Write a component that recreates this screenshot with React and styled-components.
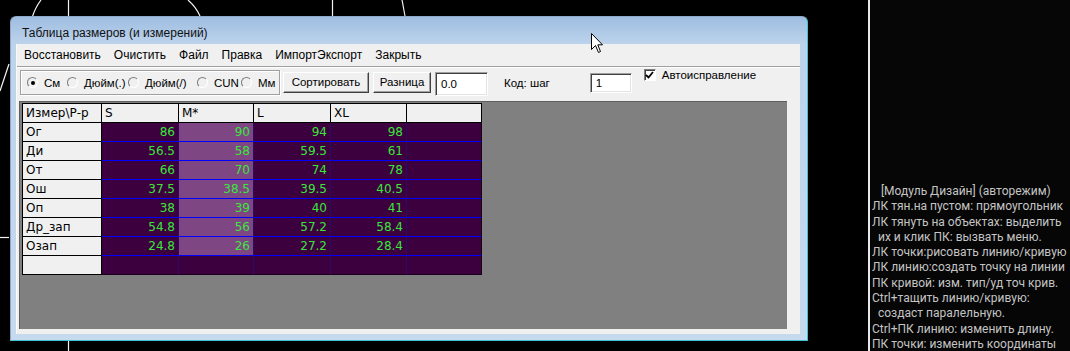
import React from "react";
import styled, { createGlobalStyle } from "styled-components";

const Global = createGlobalStyle`
  html, body { margin: 0; padding: 0; background: #000; }
  body { font-family: "Liberation Sans", Arial, sans-serif; }
`;

const Screen = styled.div`
  display: flex;
  width: 1070px;
  height: 351px;
  overflow: hidden;
  background: #000;
`;

const Canvas = styled.div`
  position: relative;
  width: 868px;
  height: 351px;
  flex: none;
`;

const Lines = styled.svg`
  position: absolute;
  left: 0;
  top: 0;
`;

const Divider = styled.div`
  width: 2px;
  flex: none;
  background: #e8e8e8;
`;

const Side = styled.div`
  flex: 1;
  background: #060606;
  padding: 184px 0 0 2px;
  font-family: Roboto, "Liberation Sans", sans-serif;
  font-size: 12px;
  line-height: 15.3px;
  color: #c4c4c4;
  white-space: pre;
`;

const Win = styled.div`
  position: absolute;
  left: 10px;
  top: 16px;
  width: 798px;
  height: 325px;
  box-sizing: border-box;
  border: 1px solid #8ea9c8;
  border-right-color: #3fc4d6;
  border-bottom-color: #3fc4d6;
  border-radius: 6px 6px 0 0;
  background: linear-gradient(#9fbde0 0px, #bcd3ec 27px, #c6daee 100%);
  display: flex;
  flex-direction: column;
`;

const TitleBar = styled.div`
  height: 27px;
  flex: none;
  display: flex;
  align-items: center;
  padding: 4px 0 0 11px;
  box-sizing: border-box;
  font-size: 12px;
  color: #111;
`;

const Client = styled.div`
  flex: 1;
  margin: 0 7px 6px 6px;
  background: #f0f0f0;
  display: flex;
  flex-direction: column;
  box-shadow: -1px 0 0 #fafafa;
`;

const MenuBar = styled.div`
  height: 22px;
  flex: none;
  display: flex;
  align-items: center;
  font-size: 12px;
  color: #000;
  background: #f0f0f0;
  padding-left: 0.5px;
`;

const MenuItem = styled.span`
  padding: 0 6.5px;
`;

const Sep = styled.div`
  height: 1px;
  flex: none;
  background: #a0a0a0;
  border-bottom: 1px solid #fff;
`;

const Toolbar = styled.div`
  height: 33px;
  flex: none;
  display: flex;
  align-items: flex-start;
  font-size: 11px;
  color: #000;
`;

const GroupBox = styled.div`
  margin: 2px 0 0 3px;
  width: 260px;
  height: 25px;
  box-sizing: border-box;
  border: 1px solid #a0a0a0;
  box-shadow: inset 1px 1px 0 #fff, 1px 1px 0 #fff;
  display: flex;
  align-items: center;
  padding-left: 6px;
`;

const RadioItem = styled.label`
  width: ${p => p.$w}px;
  flex: none;
  display: flex;
  align-items: center;
  gap: 6px;
  font-size: 11.5px;
  white-space: nowrap;
`;

const RadioDot = styled.span`
  width: 11px;
  height: 11px;
  box-sizing: border-box;
  border-radius: 50%;
  border: 1.5px solid;
  border-color: #7a7a7a #fff #fff #7a7a7a;
  background: #f0f0f0;
  display: flex;
  align-items: center;
  justify-content: center;
  flex: none;
  &::after {
    content: "";
    width: 4px;
    height: 4px;
    border-radius: 50%;
    background: ${p => (p.$on ? "#000" : "transparent")};
  }
`;

const Button = styled.div`
  margin: 4px 0 0 ${p => p.$ml}px;
  width: ${p => p.$w}px;
  height: 21px;
  box-sizing: border-box;
  border: 1px solid;
  border-color: #fff #404040 #404040 #fff;
  box-shadow: inset -1px -1px 0 #a0a0a0;
  background: #f0f0f0;
  display: flex;
  align-items: center;
  justify-content: center;
  font-size: 11.5px;
  padding-bottom: 2px;
`;

const Input = styled.div`
  margin: ${p => p.$top}px 0 0 ${p => p.$ml}px;
  width: ${p => p.$w}px;
  height: ${p => p.$h}px;
  box-sizing: border-box;
  border: 1px solid;
  border-color: #a0a0a0 #fff #fff #a0a0a0;
  box-shadow: inset 1px 1px 0 #404040, inset -1px -1px 0 #e3e3e3;
  background: #fff;
  display: flex;
  align-items: center;
  padding-left: 5px;
  font-size: 11.5px;
`;

const Label = styled.span`
  margin: ${p => p.$top}px 0 0 ${p => p.$ml}px;
  font-size: 11.5px;
  white-space: nowrap;
`;

const Check = styled.span`
  margin: 1px 0 0 ${p => p.$ml}px;
  width: 12px;
  height: 12px;
  box-sizing: border-box;
  border: 1px solid;
  border-color: #808080 #fff #fff #808080;
  box-shadow: inset 1px 1px 0 #404040;
  background: #fff;
  display: flex;
  align-items: center;
  justify-content: center;
  flex: none;
`;

const GridArea = styled.div`
  height: 228px;
  flex: none;
  margin: 0 13px 0 2px;
  box-sizing: border-box;
  border-left: 1px solid #5f5f5f;
  border-top: 1px solid #5f5f5f;
  background: #808080;
  padding: 1px 0 0 2px;
`;

const Table = styled.div`
  display: grid;
  grid-template-columns: 79px 77px 75px 77px 76px 75px;
  grid-auto-rows: 19px;
  width: max-content;
  border-left: 1px solid #000;
  border-top: 1px solid #000;
  font-family: "DejaVu Sans", Verdana, sans-serif;
  font-size: 12px;
`;

const HeadCell = styled.div`
  box-sizing: border-box;
  background: #f0f0f0;
  color: #000;
  border-right: 1px solid #000;
  border-bottom: 1px solid #000;
  display: flex;
  align-items: center;
  padding-left: 3px;
  white-space: nowrap;
`;

const DataCell = styled.div`
  box-sizing: border-box;
  background: ${p => (p.$hi ? "#7e4784" : "#3d003f")};
  color: #3ae63a;
  border-right: 1px solid ${p => (p.$last ? "#1a001a" : "#2c0a66")};
  border-bottom: 1px solid ${p => (p.$end ? "#1a001a" : "#0000ff")};
  display: flex;
  align-items: center;
  justify-content: flex-end;
  padding-right: 3px;
`;

const Cursor = styled.svg`
  position: absolute;
  left: 591px;
  top: 33px;
`;

const rows = [
  ["Ог", "86", "90", "94", "98"],
  ["Ди", "56.5", "58", "59.5", "61"],
  ["От", "66", "70", "74", "78"],
  ["Ош", "37.5", "38.5", "39.5", "40.5"],
  ["Оп", "38", "39", "40", "41"],
  ["Др_зап", "54.8", "56", "57.2", "58.4"],
  ["Озап", "24.8", "26", "27.2", "28.4"],
  ["", "", "", "", ""],
];

const sideLines = [
  "   [Модуль Дизайн] (авторежим)",
  "ЛК тян.на пустом: прямоугольник",
  "ЛК тянуть на объектах: выделить",
  "  их и клик ПК: вызвать меню.",
  "ЛК точки:рисовать линию/кривую",
  "ЛК линию:создать точку на линии",
  "ПК кривой: изм. тип/уд точ крив.",
  "Ctrl+тащить линию/кривую:",
  "  создаст паралельную.",
  "Ctrl+ПК линию: изменить длину.",
  "ПК точки: изменить координаты",
];

const radios = [
  ["См", 40, true],
  ["Дюйм(.)", 61, false],
  ["Дюйм(/)", 69, false],
  ["CUN", 44, false],
  ["Мм", 36, false],
];

export default function App() {
  return (
    <>
      <Global />
      <Screen>
        <Canvas>
          <Lines width="868" height="351" viewBox="0 0 868 351">
            <g stroke="#f2f2f2" strokeWidth="1.2" fill="none">
              <path d="M32 18 Q35 8 41 0" />
              <path d="M68.5 0 V17" />
              <path d="M188 0 Q196 7 200 16" />
              <path d="M332.5 0 V16" />
              <path d="M402 0 L405 16" />
              <path d="M0 91 L9 64" />
              <path d="M0 237.5 H9" />
              <path d="M68.5 341 V351" />
            </g>
          </Lines>
          <Win>
            <TitleBar>Таблица размеров (и измерений)</TitleBar>
            <Client>
              <MenuBar>
                <MenuItem>Восстановить</MenuItem>
                <MenuItem>Очистить</MenuItem>
                <MenuItem>Файл</MenuItem>
                <MenuItem>Правка</MenuItem>
                <MenuItem>ИмпортЭкспорт</MenuItem>
                <MenuItem>Закрыть</MenuItem>
              </MenuBar>
              <Sep />
              <Toolbar>
                <GroupBox>
                  {radios.map(([t, w, on]) => (
                    <RadioItem key={t} $w={w}>
                      <RadioDot $on={on} />
                      {t}
                    </RadioItem>
                  ))}
                </GroupBox>
                <Button $ml={3} $w={86}>Сортировать</Button>
                <Button $ml={4} $w={58}>Разница</Button>
                <Input $ml={4} $w={53} $h={24} $top={4}>0.0</Input>
                <Label $ml={16} $top={9}>Код: шаг</Label>
                <Input $ml={40} $w={42} $h={20} $top={5}>1</Input>
                <Check $ml={12}>
                  <svg width="9" height="8" viewBox="0 0 9 8">
                    <path d="M1 4 L3.5 6.5 L8 1" stroke="#000" strokeWidth="1.8" fill="none" />
                  </svg>
                </Check>
                <Label $ml={6} $top={1}>Автоисправление</Label>
              </Toolbar>
              <GridArea>
                <Table>
                  <HeadCell>Измер\Р-р</HeadCell>
                  <HeadCell>S</HeadCell>
                  <HeadCell>M*</HeadCell>
                  <HeadCell>L</HeadCell>
                  <HeadCell>XL</HeadCell>
                  <HeadCell />
                  {rows.map((r, i) => {
                    const end = i === rows.length - 1;
                    return (
                      <React.Fragment key={i}>
                        <HeadCell>{r[0]}</HeadCell>
                        <DataCell $end={end}>{r[1]}</DataCell>
                        <DataCell $end={end} $hi={!end}>{r[2]}</DataCell>
                        <DataCell $end={end}>{r[3]}</DataCell>
                        <DataCell $end={end}>{r[4]}</DataCell>
                        <DataCell $end={end} $last />
                      </React.Fragment>
                    );
                  })}
                </Table>
              </GridArea>
            </Client>
          </Win>
          <Cursor width="13" height="21" viewBox="0 0 13 21">
            <path d="M0.5 0.5 L0.5 16.5 L4.5 12.5 L7.5 19.5 L9.5 18.5 L6.8 11.8 L11.5 11.8 Z" fill="#fff" stroke="#000" strokeWidth="1" />
          </Cursor>
        </Canvas>
        <Divider />
        <Side>
          {sideLines.map((l, i) => (
            <div key={i}>{l}</div>
          ))}
        </Side>
      </Screen>
    </>
  );
}
